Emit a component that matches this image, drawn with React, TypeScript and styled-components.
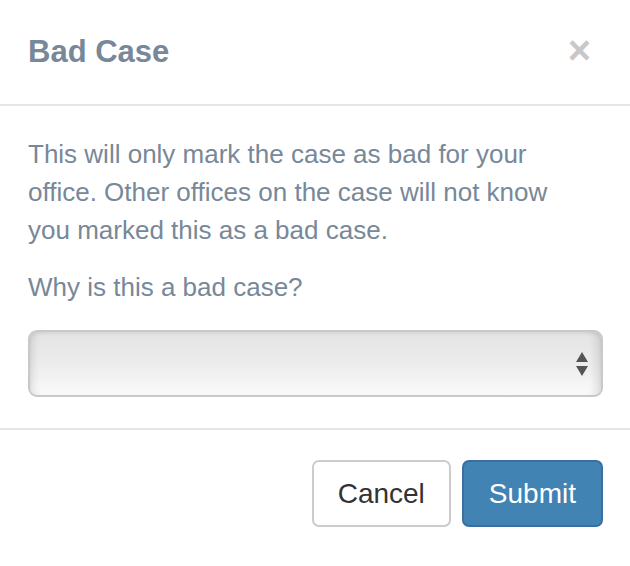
import React from 'react';
import styled, { createGlobalStyle } from 'styled-components';

const GlobalStyle = createGlobalStyle`
  html, body {
    margin: 0;
    padding: 0;
    background: #fff;
  }
  body {
    font-family: 'Liberation Sans', Arial, sans-serif;
  }
  * {
    box-sizing: border-box;
  }
`;

export default function App() {
  return (
    <>
      <GlobalStyle />
      <Modal>
        <Header>
          <Title>Bad Case</Title>
          <Close type="button" aria-label="Close">
            ×
          </Close>
        </Header>
        <Body>
          <Text>
            This will only mark the case as bad for your office. Other offices
            on the case will not know you marked this as a bad case.
          </Text>
          <Label htmlFor="reason">Why is this a bad case?</Label>
          <SelectWrap>
            <Select id="reason" defaultValue="">
              <option value=""></option>
            </Select>
            <Arrows width="14" height="26" viewBox="0 0 14 26">
              <path d="M7 1 L13 11 L1 11 Z" fill="#555" />
              <path d="M1 15 L13 15 L7 25 Z" fill="#555" />
            </Arrows>
          </SelectWrap>
        </Body>
        <Footer>
          <Button>Cancel</Button>
          <Button primary>Submit</Button>
        </Footer>
      </Modal>
    </>
  );
}

const Modal = styled.div`
  width: 630px;
  height: 566px;
  background: #fff;
  color: #778899;
`;

const Header = styled.div`
  display: flex;
  align-items: center;
  justify-content: space-between;
  padding: 28px;
  border-bottom: 2px solid #e5e5e5;
`;

const Title = styled.h4`
  margin: 0;
  font-size: 31px;
  line-height: 48px;
  font-weight: 700;
  color: #778899;
`;

const Close = styled.button`
  border: 0;
  background: transparent;
  padding: 0;
  margin: 0 11px 4px 0;
  font-family: 'Liberation Sans', Arial, sans-serif;
  font-size: 40px;
  line-height: 40px;
  font-weight: 700;
  color: #c8c8c8;
  cursor: pointer;
`;

const Body = styled.div`
  padding: 29px 27px 31px 28px;
`;

const Text = styled.p`
  margin: 0 0 19px;
  max-width: 560px;
  font-size: 26px;
  line-height: 38px;
`;

const Label = styled.label`
  display: block;
  font-size: 26px;
  line-height: 38px;
  margin-bottom: 24px;
`;

const SelectWrap = styled.div`
  position: relative;
`;

const Select = styled.select`
  display: block;
  width: 100%;
  height: 67px;
  appearance: none;
  -webkit-appearance: none;
  border: 2px solid #c9c9c9;
  border-radius: 9px;
  background: linear-gradient(to bottom, #e4e4e4 0%, #ececec 50%, #fafafa 100%);
  box-shadow: inset 8px 0 8px -6px rgba(0, 0, 0, 0.12),
    inset -12px 0 10px -8px rgba(0, 0, 0, 0.12),
    inset 0 2px 3px rgba(0, 0, 0, 0.06);
  font-size: 26px;
  outline: none;
`;

const Arrows = styled.svg`
  position: absolute;
  right: 14px;
  top: 21px;
`;

const Footer = styled.div`
  display: flex;
  justify-content: flex-end;
  gap: 11px;
  padding: 30px 27px 0 0;
  border-top: 2px solid #e5e5e5;
`;

const Button = styled.button<{ primary?: boolean }>`
  height: 67px;
  padding: 0 ${(p) => (p.primary ? '25px' : '24px')};
  border-radius: 7px;
  font-family: 'Liberation Sans', Arial, sans-serif;
  font-size: 28px;
  cursor: pointer;
  border: 2px solid ${(p) => (p.primary ? '#3a6fa0' : '#cccccc')};
  background: ${(p) => (p.primary ? '#4183b3' : '#fff')};
  color: ${(p) => (p.primary ? '#fff' : '#333')};
`;
